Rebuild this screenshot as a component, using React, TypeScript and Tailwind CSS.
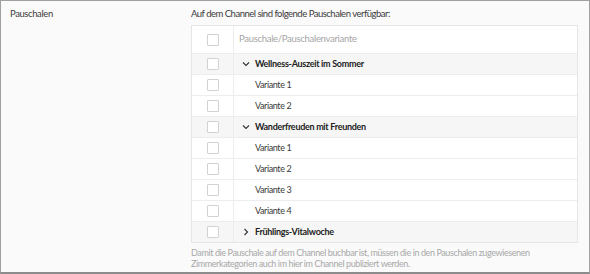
const groups = [
  { name: "Wellness-Auszeit im Sommer", open: true, items: ["Variante 1", "Variante 2"] },
  { name: "Wanderfreuden mit Freunden", open: true, items: ["Variante 1", "Variante 2", "Variante 3", "Variante 4"] },
  { name: "Frühlings-Vitalwoche", open: false, items: [] },
];

function Box() {
  return <span className="block w-[12px] h-[12px] border border-[#d2d2d2] rounded-[1px] bg-white" />;
}

function Chevron({ open }: { open: boolean }) {
  return (
    <svg width="8" height="8" viewBox="0 0 8 8" className="mr-[5px]">
      {open ? (
        <path d="M1 2.5 L4 5.5 L7 2.5" fill="none" stroke="#333" strokeWidth="1.1" />
      ) : (
        <path d="M2.5 1 L5.5 4 L2.5 7" fill="none" stroke="#333" strokeWidth="1.1" />
      )}
    </svg>
  );
}

function Row({ children, group }: { children: React.ReactNode; group?: boolean }) {
  return (
    <div className={`flex h-[21px] border-t border-[#ededed] ${group ? "bg-[#f6f6f6]" : "bg-white"}`}>
      <div className="w-[42px] flex items-center justify-center border-r border-[#ededed]">
        <Box />
      </div>
      <div className="flex items-center flex-1">{children}</div>
    </div>
  );
}

export default function App() {
  return (
    <div
      className="w-[590px] h-[274px] bg-[#fafafa] border border-[#a0a0a0] border-b-2 border-b-[#8c8c8c] flex text-[#3a3a3a] text-[9px] tracking-[-0.4px]"
      style={{ fontFamily: "Lato, sans-serif" }}
    >
      <div className="w-[190px] pl-[9px] pt-[6px] text-[9.5px]">Pauschalen</div>
      <div className="flex-1 pr-[11px] pt-[6px]">
        <p className="h-[18px] text-[9.5px] tracking-[-0.5px]">Auf dem Channel sind folgende Pauschalen verfügbar:</p>
        <div className="border border-[#e6e6e6] bg-white">
          <div className="flex h-[27px] bg-white">
            <div className="w-[42px] flex items-center justify-center border-r border-[#ededed]">
              <Box />
            </div>
            <div className="flex items-center pl-[5px] text-[9.5px] tracking-[-0.3px] text-[#a5a5a5]">Pauschale/Pauschalenvariante</div>
          </div>
          {groups.map((g) => (
            <div key={g.name}>
              <Row group>
                <div className="flex items-center pl-[8px] font-bold text-[#222] tracking-[-0.3px]">
                  <Chevron open={g.open} />
                  {g.name}
                </div>
              </Row>
              {g.items.map((it) => (
                <Row key={it}>
                  <span className="pl-[21px]">{it}</span>
                </Row>
              ))}
            </div>
          ))}
        </div>
        <p className="leading-[11px] text-[#a8a8a8] mt-[4px] pl-[-2px] whitespace-nowrap">
          Damit die Pauschale auf dem Channel buchbar ist, müssen die in den Pauschalen zugewiesenen
          <br />
          Zimmerkategorien auch im hier im Channel publiziert werden.
        </p>
      </div>
    </div>
  );
}
